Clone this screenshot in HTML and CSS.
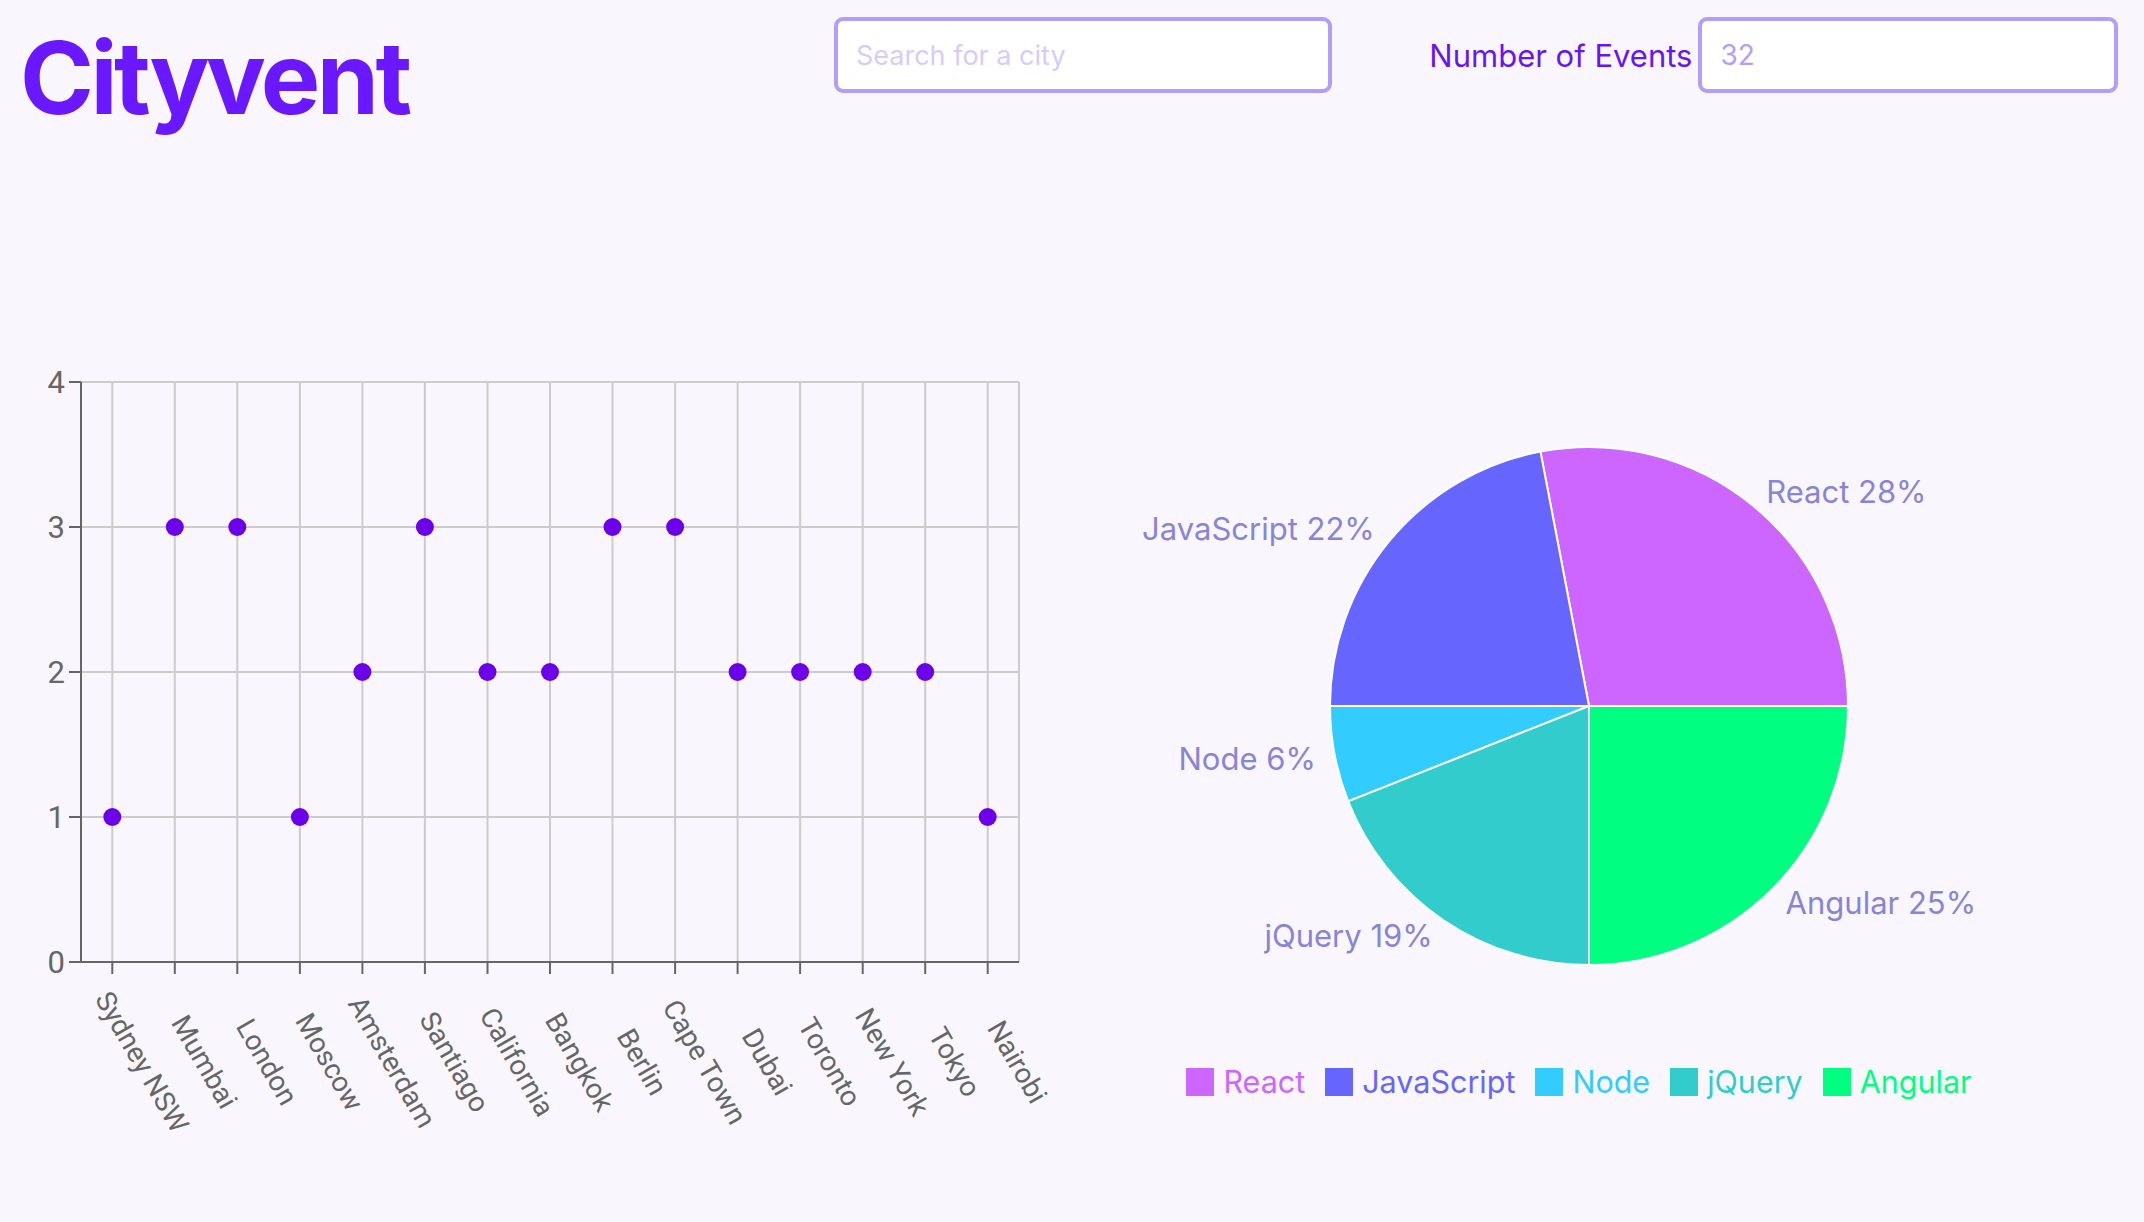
FILE: index.html
```html
<!DOCTYPE html>
<html lang="en">
<head>
  <meta charset="UTF-8" />
  <meta name="viewport" content="width=device-width, initial-scale=1.0"/>
  <title>Cityvent</title>
  <link rel="stylesheet" href="styles.css">
</head>
<body>
  <header class="topbar">
    <h1 class="brand">Cityvent</h1>

    <div class="city-search">
      <input class="field" type="text" placeholder="Search for a city">
    </div>

    <div class="event-count">
      <label for="events">Number of Events</label>
      <input class="field" id="events" type="number" value="32">
    </div>
  </header>

  <main class="charts">
    <!-- events per city -->
    <div class="scatter">
      <svg width="1072" height="900" viewBox="0 0 1072 900">
        <g class="grid">
          <line x1="81" y1="82" x2="1019" y2="82"/>
          <line x1="81" y1="227" x2="1019" y2="227"/>
          <line x1="81" y1="372" x2="1019" y2="372"/>
          <line x1="81" y1="517" x2="1019" y2="517"/>
          <line x1="112.3" y1="82" x2="112.3" y2="662"/>
          <line x1="174.8" y1="82" x2="174.8" y2="662"/>
          <line x1="237.3" y1="82" x2="237.3" y2="662"/>
          <line x1="299.9" y1="82" x2="299.9" y2="662"/>
          <line x1="362.4" y1="82" x2="362.4" y2="662"/>
          <line x1="424.9" y1="82" x2="424.9" y2="662"/>
          <line x1="487.5" y1="82" x2="487.5" y2="662"/>
          <line x1="550" y1="82" x2="550" y2="662"/>
          <line x1="612.5" y1="82" x2="612.5" y2="662"/>
          <line x1="675.1" y1="82" x2="675.1" y2="662"/>
          <line x1="737.6" y1="82" x2="737.6" y2="662"/>
          <line x1="800.1" y1="82" x2="800.1" y2="662"/>
          <line x1="862.7" y1="82" x2="862.7" y2="662"/>
          <line x1="925.2" y1="82" x2="925.2" y2="662"/>
          <line x1="987.7" y1="82" x2="987.7" y2="662"/>
          <line x1="1019" y1="82" x2="1019" y2="662"/>
        </g>

        <g class="axis">
          <line x1="81" y1="82" x2="81" y2="662"/>
          <line x1="81" y1="662" x2="1019" y2="662"/>
          <line x1="69" y1="82" x2="81" y2="82"/>
          <line x1="69" y1="227" x2="81" y2="227"/>
          <line x1="69" y1="372" x2="81" y2="372"/>
          <line x1="69" y1="517" x2="81" y2="517"/>
          <line x1="69" y1="662" x2="81" y2="662"/>
          <line x1="112.3" y1="662" x2="112.3" y2="674"/>
          <line x1="174.8" y1="662" x2="174.8" y2="674"/>
          <line x1="237.3" y1="662" x2="237.3" y2="674"/>
          <line x1="299.9" y1="662" x2="299.9" y2="674"/>
          <line x1="362.4" y1="662" x2="362.4" y2="674"/>
          <line x1="424.9" y1="662" x2="424.9" y2="674"/>
          <line x1="487.5" y1="662" x2="487.5" y2="674"/>
          <line x1="550" y1="662" x2="550" y2="674"/>
          <line x1="612.5" y1="662" x2="612.5" y2="674"/>
          <line x1="675.1" y1="662" x2="675.1" y2="674"/>
          <line x1="737.6" y1="662" x2="737.6" y2="674"/>
          <line x1="800.1" y1="662" x2="800.1" y2="674"/>
          <line x1="862.7" y1="662" x2="862.7" y2="674"/>
          <line x1="925.2" y1="662" x2="925.2" y2="674"/>
          <line x1="987.7" y1="662" x2="987.7" y2="674"/>
        </g>

        <g class="tick-y">
          <text x="65" y="82" dy="0.355em">4</text>
          <text x="65" y="227" dy="0.355em">3</text>
          <text x="65" y="372" dy="0.355em">2</text>
          <text x="65" y="517" dy="0.355em">1</text>
          <text x="65" y="662" dy="0.355em">0</text>
        </g>

        <!-- labels are centred, turned 60deg -->
        <g class="tick-x">
          <text x="141.8" y="762" transform="rotate(60 141.8 762)">Sydney NSW</text>
          <text x="204.3" y="762" transform="rotate(60 204.3 762)">Mumbai</text>
          <text x="266.8" y="762" transform="rotate(60 266.8 762)">London</text>
          <text x="329.4" y="762" transform="rotate(60 329.4 762)">Moscow</text>
          <text x="391.9" y="762" transform="rotate(60 391.9 762)">Amsterdam</text>
          <text x="454.4" y="762" transform="rotate(60 454.4 762)">Santiago</text>
          <text x="517" y="762" transform="rotate(60 517 762)">California</text>
          <text x="579.5" y="762" transform="rotate(60 579.5 762)">Bangkok</text>
          <text x="642" y="762" transform="rotate(60 642 762)">Berlin</text>
          <text x="704.6" y="762" transform="rotate(60 704.6 762)">Cape Town</text>
          <text x="767.1" y="762" transform="rotate(60 767.1 762)">Dubai</text>
          <text x="829.6" y="762" transform="rotate(60 829.6 762)">Toronto</text>
          <text x="892.2" y="762" transform="rotate(60 892.2 762)">New York</text>
          <text x="954.7" y="762" transform="rotate(60 954.7 762)">Tokyo</text>
          <text x="1017.2" y="762" transform="rotate(60 1017.2 762)">Nairobi</text>
        </g>

        <g class="dots">
          <circle cx="112.3" cy="517" r="9"/>
          <circle cx="174.8" cy="227" r="9"/>
          <circle cx="237.3" cy="227" r="9"/>
          <circle cx="299.9" cy="517" r="9"/>
          <circle cx="362.4" cy="372" r="9"/>
          <circle cx="424.9" cy="227" r="9"/>
          <circle cx="487.5" cy="372" r="9"/>
          <circle cx="550" cy="372" r="9"/>
          <circle cx="612.5" cy="227" r="9"/>
          <circle cx="675.1" cy="227" r="9"/>
          <circle cx="737.6" cy="372" r="9"/>
          <circle cx="800.1" cy="372" r="9"/>
          <circle cx="862.7" cy="372" r="9"/>
          <circle cx="925.2" cy="372" r="9"/>
          <circle cx="987.7" cy="517" r="9"/>
        </g>
      </svg>
    </div>

    <!-- genres -->
    <div class="genres">
      <svg class="pie" width="1034" height="763" viewBox="0 0 1034 763">
        <g class="slices">
          <path class="react" d="M517 406 L776 406 A259 259 0 0 0 468.47 151.59 Z"/>
          <path class="javascript" d="M517 406 L468.47 151.59 A259 259 0 0 0 258 406 Z"/>
          <path class="node" d="M517 406 L258 406 A259 259 0 0 0 276.19 501.34 Z"/>
          <path class="jquery" d="M517 406 L276.19 501.34 A259 259 0 0 0 517 665 Z"/>
          <path class="angular" d="M517 406 L517 665 A259 259 0 0 0 776 406 Z"/>
        </g>
        <g class="pie-label">
          <text x="694.2" y="191.8">React 28%</text>
          <text x="302.8" y="228.8" text-anchor="end">JavaScript 22%</text>
          <text x="243.9" y="458.1" text-anchor="end">Node 6%</text>
          <text x="360.7" y="635.9" text-anchor="end">jQuery 19%</text>
          <text x="713.6" y="602.6">Angular 25%</text>
        </g>
      </svg>

      <ul class="legend">
        <li class="react"><span class="swatch"></span>React</li>
        <li class="javascript"><span class="swatch"></span>JavaScript</li>
        <li class="node"><span class="swatch"></span>Node</li>
        <li class="jquery"><span class="swatch"></span>jQuery</li>
        <li class="angular"><span class="swatch"></span>Angular</li>
      </ul>
    </div>
  </main>
</body>
</html>
```

FILE: styles.css
```css
body {
  margin: 0;
  background: #f9f7fd;
  font-family: Inter, "Noto Sans", sans-serif;
}

/* header */
.topbar {
  display: grid;
  grid-template-columns: repeat(3, minmax(0, 1fr));
  align-items: start;
}

.brand {
  margin: 17px 0 0 20px;
  font-size: 100px;
  font-weight: 700;
  line-height: normal;
  letter-spacing: -0.035em;
  color: #6a18ff;
}

.city-search {
  justify-self: center;
  margin: 17px 0 0 22px;
}

.field {
  width: 498px;
  height: 76px;
  box-sizing: border-box;
  padding: 0 18px;
  border: 4px solid #b39dfc;
  border-radius: 9px;
  background: #fff;
  font-family: Inter, "Noto Sans", sans-serif;
  font-size: 27px;
  color: #b39dfc;
  outline: none;
}

.field::placeholder {
  color: #d6ccfb;
}

.field::-webkit-inner-spin-button,
.field::-webkit-outer-spin-button {
  -webkit-appearance: none;
  margin: 0;
}

.event-count {
  display: flex;
  align-items: center;
  gap: 6px;
  margin: 17px 26px 0 0;
}

.event-count label {
  font-size: 31px;
  color: #6a14f2;
  white-space: nowrap;
}

.event-count .field {
  flex: 1;
  width: auto;
  min-width: 0;
  font-size: 28px;
}

/* charts */
.charts {
  display: grid;
  grid-template-columns: 1072px 1fr;
  padding-right: 38px;
  margin-top: 162px;
}

.scatter svg,
.pie {
  display: block;
}

.grid line {
  stroke: #ccc;
  stroke-width: 2;
}

.axis line {
  stroke: #666;
  stroke-width: 2;
}

.tick-y text,
.tick-x text {
  font-family: Roboto, "Liberation Sans", sans-serif;
  fill: #666;
}

.tick-y text {
  font-size: 31px;
  text-anchor: end;
}

.tick-x text {
  font-size: 28px;
  text-anchor: middle;
  dominant-baseline: central;
}

.dots circle {
  fill: #6c00e8;
}

.slices path {
  stroke: #fff;
  stroke-width: 2;
}

.slices .react { fill: #cc66ff; }
.slices .javascript { fill: #6666ff; }
.slices .node { fill: #33ccff; }
.slices .jquery { fill: #33cccc; }
.slices .angular { fill: #00ff80; }

.pie-label text {
  font-family: Inter, "Noto Sans", sans-serif;
  font-size: 31px;
  fill: #8884d8;
  dominant-baseline: central;
}

.legend {
  display: flex;
  justify-content: center;
  margin: 0;
  padding: 0;
  list-style: none;
  font-size: 30.5px;
  line-height: 38px;
}

.legend li {
  display: flex;
  align-items: center;
  margin-right: 20px;
}

.swatch {
  width: 28px;
  height: 28px;
  margin-right: 9px;
}

.legend .react { color: #cc66ff; }
.legend .javascript { color: #6666ff; }
.legend .node { color: #33ccff; }
.legend .jquery { color: #33cccc; }
.legend .angular { color: #00ff80; }

.legend .react .swatch { background: #cc66ff; }
.legend .javascript .swatch { background: #6666ff; }
.legend .node .swatch { background: #33ccff; }
.legend .jquery .swatch { background: #33cccc; }
.legend .angular .swatch { background: #00ff80; }
```
